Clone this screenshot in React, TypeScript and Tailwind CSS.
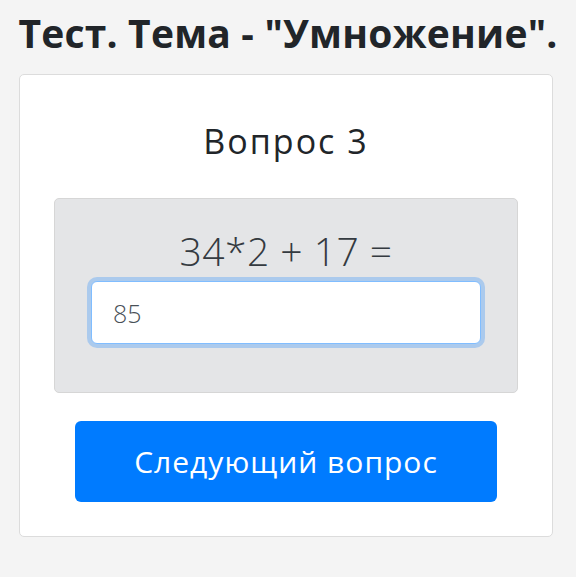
export default function App() {
  return (
    <div className="min-h-[577px] bg-[#f4f4f4] pt-[9px] font-['Open_Sans',sans-serif]">
      <h1 className="text-center text-[39px] font-bold leading-[48px] tracking-[0.2px] text-[#212529]">
        Тест. Тема - "Умножение".
      </h1>
      <div className="ml-[19px] mt-[17px] flex w-[534px] flex-col items-center rounded-[5px] border border-[#dcdcdc] bg-white px-[34px] pb-[34px] pt-[42px]">
        <div className="text-[34px] leading-[48px] tracking-[2px] text-[#212529]">Вопрос 3</div>
        <div className="mt-[33px] flex w-full flex-col items-center rounded-[5px] border border-[#d6d6d6] bg-[#e4e5e7] px-[36px] pb-[48px] pt-[28px]">
          <div className="text-[39px] font-light leading-[48px] tracking-[0.5px] text-[#343a40]">34*2 + 17 =</div>
          <input
            readOnly
            value="85"
            className="mt-[6px] h-[63px] w-full rounded-[6px] border border-[#80bdff] bg-white px-[21px] text-[25px] font-light text-[#495057] shadow-[0_0_0_4px_rgba(0,123,255,0.25)] outline-none"
          />
        </div>
        <button className="mt-[28px] h-[81px] w-[422px] rounded-[6px] bg-[#007bff] text-[30px] tracking-[1px] text-white">
          Следующий вопрос
        </button>
      </div>
    </div>
  )
}
